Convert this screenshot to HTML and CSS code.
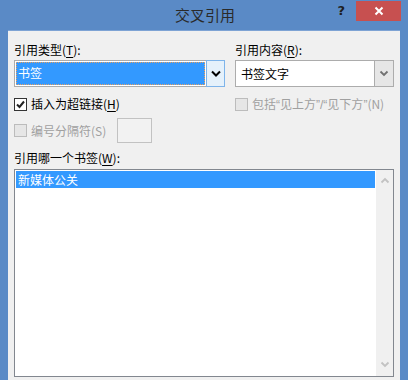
FILE: index.html
```html
<!DOCTYPE html>
<html lang="zh-CN">
<head>
<meta charset="utf-8">
<title>交叉引用</title>
<link rel="stylesheet" href="styles.css">
</head>
<body>
<div class="frame">
  <div class="titlebar">
    <div class="tb-left"></div>
    <div class="tb-title">交叉引用</div>
    <div class="tb-right">
      <span class="help">?</span>
      <span class="close">
        <svg width="10" height="10" viewBox="0 0 10 10"><path d="M1.5 1.5 L8.5 8.5 M8.5 1.5 L1.5 8.5" stroke="#fff" stroke-width="2" fill="none"/></svg>
      </span>
    </div>
  </div>
  <div class="client">
    <div class="cols">
      <div class="col-left">
        <div class="label">引用类型(<u>T</u>):</div>
        <div class="combo focused">
          <div class="field"><span class="sel">书签</span></div>
          <div class="btn">
            <svg width="10" height="7" viewBox="0 0 10 7"><path d="M1 1.5 L5 5.5 L9 1.5" stroke="#000" stroke-width="2" fill="none"/></svg>
          </div>
        </div>
        <div class="check-row first">
          <span class="cb checked">
            <svg width="11" height="11" viewBox="0 0 11 11"><path d="M2 5.5 L4.5 8 L9 2.5" stroke="#222" stroke-width="2" fill="none"/></svg>
          </span>
          <span class="cb-text">插入为超链接(<u>H</u>)</span>
        </div>
        <div class="check-row sep">
          <span class="cb disabled"></span>
          <span class="cb-text dim">编号分隔符(S)</span>
          <span class="textbox"></span>
        </div>
      </div>
      <div class="col-right">
        <div class="label">引用内容(<u>R</u>):</div>
        <div class="combo">
          <div class="field"><span class="val">书签文字</span></div>
          <div class="btn grey">
            <svg width="10" height="7" viewBox="0 0 10 7"><path d="M1.5 1.5 L5 5 L8.5 1.5" stroke="#707070" stroke-width="1.8" fill="none"/></svg>
          </div>
        </div>
        <div class="check-row first">
          <span class="cb disabled"></span>
          <span class="cb-text dim">包括<span class="q">“</span>见上方<span class="q">”/“</span>见下方<span class="q">”</span>(N)</span>
        </div>
      </div>
    </div>
    <div class="label list-label">引用哪一个书签(<u>W</u>):</div>
    <div class="listbox">
      <div class="items">
        <div class="item selected">新媒体公关</div>
      </div>
      <div class="scroll">
        <svg width="10" height="7" viewBox="0 0 10 7"><path d="M1.5 5.5 L5 2 L8.5 5.5" stroke="#c2c2c2" stroke-width="1.8" fill="none"/></svg>
        <svg width="10" height="7" viewBox="0 0 10 7"><path d="M1.5 1.5 L5 5 L8.5 1.5" stroke="#c2c2c2" stroke-width="1.8" fill="none"/></svg>
      </div>
    </div>
  </div>
</div>
</body>
</html>
```
FILE: styles.css
```css
html, body {
  margin: 0;
  padding: 0;
  overflow: hidden;
}
body {
  width: 408px;
  height: 380px;
  background: #5a8ac6;
  font-family: "Noto Sans CJK SC", "Noto Sans", sans-serif;
  font-size: 12px;
  color: #000;
}
.frame {
  width: 408px;
  height: 380px;
  display: flex;
  flex-direction: column;
  background: #5a8ac6;
  overflow: hidden;
}
.titlebar {
  height: 30px;
  flex: none;
  display: grid;
  grid-template-columns: 1fr auto 1fr;
}
.tb-title {
  font-size: 15px;
  line-height: 30px;
  color: #2a2a2a;
  padding-left: 2px;
}
.tb-right {
  display: flex;
  justify-content: flex-end;
  align-items: flex-start;
}
.help {
  font-family: "DejaVu Sans", sans-serif;
  font-weight: bold;
  font-size: 13px;
  line-height: 14px;
  color: #1e1e1e;
  margin-top: 4px;
  margin-right: 11px;
}
.close {
  width: 45px;
  height: 20px;
  margin-top: 1px;
  margin-right: 7px;
  background: #c75050;
  display: flex;
  align-items: center;
  justify-content: center;
}
.client {
  flex: 1;
  margin: 0 8px;
  background: #f0f0f0;
  padding: 12px 6px 0 6px;
  box-shadow: inset 0 1px 0 #7ea3d4;
  overflow: hidden;
}
.cols {
  display: flex;
  gap: 10px;
}
.col-left {
  width: 211px;
  flex: none;
}
.col-right {
  flex: 1;
  min-width: 0;
}
.label {
  line-height: 16px;
  height: 16px;
  white-space: nowrap;
}
.label u {
  text-underline-offset: 2px;
}
.combo {
  margin-top: 2px;
  height: 27px;
  box-sizing: border-box;
  border: 1px solid #acacac;
  display: flex;
  background: #fff;
}
.combo .field {
  flex: 1;
  padding: 1px;
  display: flex;
}
.combo .sel {
  flex: 1;
  background: #3399ff;
  color: #fff;
  line-height: 21px;
  padding-left: 2px;
  outline: 1px dotted #e8a060;
  outline-offset: -1px;
}
.combo .val {
  line-height: 23px;
  padding-left: 4px;
}
.combo .btn {
  width: 17px;
  display: flex;
  align-items: center;
  justify-content: center;
}
.combo.focused .btn {
  margin: -1px -1px -1px 0;
  border: 1px solid #7eb4ea;
  background: #e5f1fb;
}
.combo .btn.grey {
  width: 18px;
  background: #e6e6e6;
  border-left: 1px solid #acacac;
}
.check-row {
  display: flex;
  align-items: center;
  white-space: nowrap;
}
.check-row.first {
  margin-top: 9px;
  height: 16px;
}
.check-row.sep {
  margin-top: 6px;
  height: 25px;
}
.cb {
  width: 13px;
  height: 13px;
  box-sizing: border-box;
  border: 1px solid #333;
  background: #fff;
  display: flex;
  align-items: center;
  justify-content: center;
  flex: none;
}
.cb.disabled {
  border-color: #bcbcbc;
  background: #e6e6e6;
}
.cb-text {
  margin-left: 4px;
  line-height: 16px;
}
.cb-text u {
  text-underline-offset: 2px;
}
.q {
  font-family: "Liberation Sans", sans-serif;
}
.dim {
  color: #a0a0a0;
}
.textbox {
  margin-left: 11px;
  width: 35px;
  height: 25px;
  box-sizing: border-box;
  border: 1px solid #c2c2c2;
  background: #f2f2f2;
}
.list-label {
  margin-top: 7px;
}
.listbox {
  margin-top: 3px;
  height: 208px;
  box-sizing: border-box;
  border: 1px solid #82878f;
  background: #fff;
  display: flex;
}
.items {
  flex: 1;
  padding: 1px;
}
.item {
  height: 17px;
  line-height: 17px;
  padding-left: 2px;
}
.item.selected {
  background: #3399ff;
  color: #fff;
}
.scroll {
  width: 17px;
  background: #f0f0f0;
  display: flex;
  flex-direction: column;
  justify-content: space-between;
  align-items: center;
  padding: 7px 0 8px;
}
```
